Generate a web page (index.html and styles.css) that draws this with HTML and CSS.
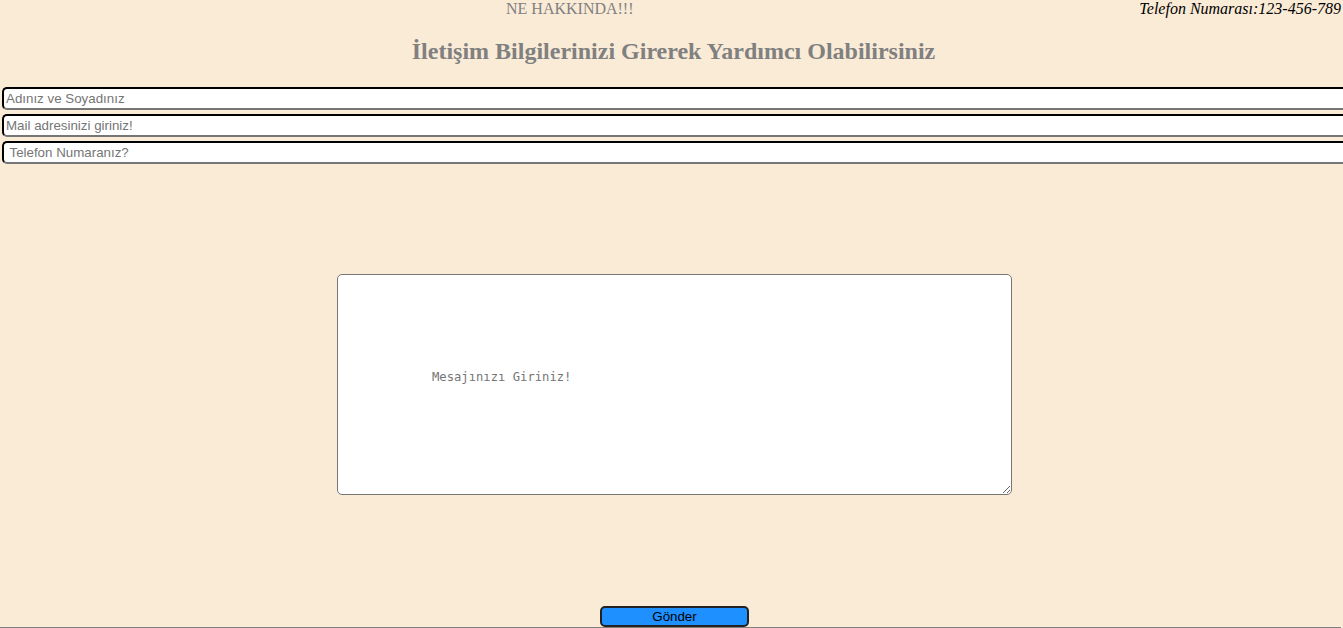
FILE: index.html
```html
<!DOCTYPE html>
<html lang="tr">
<head>
<meta charset="utf-8">
<title>İletişim</title>
<link rel="stylesheet" href="styles.css">
</head>
<body>
<header class="topbar">
  <a class="about">NE HAKKINDA!!!</a>
  <span class="phone">Telefon Numarası:123-456-789</span>
</header>
<h2 class="title">İletişim Bilgilerinizi Girerek Yardımcı Olabilirsiniz</h2>
<form class="form">
  <input class="field" type="text" placeholder="Adınız ve Soyadınız">
  <input class="field" type="text" placeholder="Mail adresinizi giriniz!">
  <input class="field" type="text" placeholder=" Telefon Numaranız?">
  <textarea class="message" placeholder="Mesajınızı Giriniz!"></textarea>
  <button class="send" type="button">Gönder</button>
</form>
<div class="bottomline"></div>
</body>
</html>
```

FILE: styles.css
```css
html, body {
  margin: 0;
  padding: 0;
}
body {
  background: #faebd7;
  font-family: "Liberation Serif", "Times New Roman", serif;
  overflow: hidden;
  height: 628px;
}
.topbar {
  display: flex;
  align-items: flex-start;
  height: 18px;
  font-size: 16px;
  line-height: 18px;
}
.about {
  margin-left: 506px;
  color: #808080;
}
.phone {
  margin-left: auto;
  margin-right: 2px;
  font-style: italic;
  color: #000;
}
.title {
  margin: 20px 0 0;
  padding-left: 4px;
  text-align: center;
  font-size: 24px;
  line-height: 27px;
  color: #808080;
  font-weight: bold;
}
.form {
  display: flex;
  flex-direction: column;
  align-items: flex-start;
  padding-top: 22px;
}
.field {
  box-sizing: border-box;
  width: calc(100% + 20px);
  flex-shrink: 0;
  margin: 0 0 4px 2px;
  height: 23px;
  border: 2px inset #767676;
  border-color: #222 #767676 #767676 #222;
  border-radius: 5px;
  background: #fff;
  padding: 1px 2px;
  font-family: "Liberation Sans", Arial, sans-serif;
  font-size: 13.33px;
  color: #000;
}
.field::placeholder {
  color: #757575;
}
.message {
  box-sizing: border-box;
  align-self: center;
  width: 675px;
  height: 221px;
  margin: 106px 0 0 6px;
  border: 1px solid #767676;
  border-radius: 5px;
  background: #fff;
  padding: 95px 94px 2px;
  font-family: "DejaVu Sans Mono", monospace;
  font-size: 12.2px;
  line-height: 15px;
}
.message::placeholder {
  color: #757575;
}
.send {
  box-sizing: border-box;
  align-self: center;
  width: 149px;
  height: 21px;
  margin: 111px 0 0 6px;
  background: #1e90ff;
  border: 2px solid #222;
  border-radius: 5px;
  font-family: "Liberation Sans", Arial, sans-serif;
  font-size: 13.33px;
  color: #000;
  padding: 0;
}
.bottomline {
  border-top: 1px solid #808080;
  margin-right: 2px;
}
```
